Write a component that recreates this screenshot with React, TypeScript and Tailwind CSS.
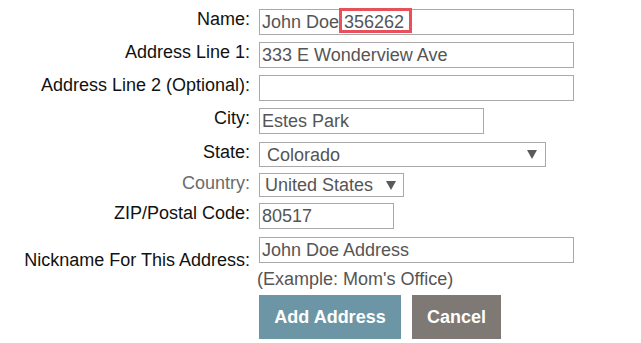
import React from "react";

function Arrow() {
  return (
    <svg width="10" height="9" viewBox="0 0 10 9" className="shrink-0">
      <polygon points="0,0 10,0 5,9" fill="#5a5a5a" />
    </svg>
  );
}

function Label({ children, gray = false, extra = "" }: { children: React.ReactNode; gray?: boolean; extra?: string }) {
  return (
    <div className={`w-[250px] shrink-0 text-right leading-[20px] ${gray ? "text-[#6b6b6b]" : "text-[#111]"} ${extra}`}>
      {children}
    </div>
  );
}

export default function App() {
  return (
    <div className="w-[641px] h-[343px] bg-white overflow-hidden font-['Liberation_Sans',Arial,sans-serif] text-[18px]">
      <div className="flex flex-col pt-[9px]">
        {/* Name */}
        <div className="flex items-start gap-[9px]">
          <Label>Name:</Label>
          <div className="relative w-[315px] h-[26px] border border-[#a9a9a9] pl-[2px] flex items-center text-[#555] leading-[20px] whitespace-pre">
            John Doe 356262
            <span className="absolute left-[79px] top-[-2px] w-[73px] h-[25px] border-[3px] border-[#e8505b]" />
          </div>
        </div>
        {/* Address Line 1 */}
        <div className="flex items-start gap-[9px] mt-[7px]">
          <Label>Address Line 1:</Label>
          <div className="w-[315px] h-[26px] border border-[#a9a9a9] pl-[2px] flex items-center text-[#555] leading-[20px]">
            333 E Wonderview Ave
          </div>
        </div>
        {/* Address Line 2 */}
        <div className="flex items-start gap-[9px] mt-[7px]">
          <Label>Address Line 2 (Optional):</Label>
          <div className="w-[315px] h-[26px] border border-[#a9a9a9]" />
        </div>
        {/* City */}
        <div className="flex items-start gap-[9px] mt-[7px]">
          <Label>City:</Label>
          <div className="w-[225px] h-[26px] border border-[#a9a9a9] pl-[2px] flex items-center text-[#555] leading-[20px]">
            Estes Park
          </div>
        </div>
        {/* State */}
        <div className="flex items-start gap-[9px] mt-[8px]">
          <Label>State:</Label>
          <div className="w-[287px] h-[25px] border border-[#a9a9a9] pl-[7px] pr-[8px] flex items-center text-[#555] leading-[20px]">
            <span>Colorado</span>
            <span className="ml-auto flex"><Arrow /></span>
          </div>
        </div>
        {/* Country */}
        <div className="flex items-start gap-[9px] mt-[6px]">
          <Label gray>Country:</Label>
          <div className="w-[145px] h-[24px] border border-[#a9a9a9] pl-[5px] pr-[7px] flex items-center text-[#555] leading-[20px]">
            <span>United States</span>
            <span className="ml-auto flex"><Arrow /></span>
          </div>
        </div>
        {/* ZIP */}
        <div className="flex items-start gap-[9px] mt-[6px]">
          <Label>ZIP/Postal Code:</Label>
          <div className="w-[135px] h-[26px] border border-[#a9a9a9] pl-[2px] flex items-center text-[#555] leading-[20px]">
            80517
          </div>
        </div>
        {/* Nickname */}
        <div className="flex items-start gap-[9px] mt-[8px]">
          <Label extra="pt-[13px]">Nickname For This Address:</Label>
          <div className="flex flex-col">
            <div className="w-[315px] h-[26px] border border-[#a9a9a9] pl-[2px] flex items-center text-[#555] leading-[20px]">
              John Doe Address
            </div>
            <div className="mt-[6px] -ml-[2px] leading-[20px] text-[#555]">(Example: Mom's Office)</div>
            <div className="flex gap-[11px] mt-[6px]">
              <div className="h-[44px] w-[142px] bg-[#6c96a5] text-white font-bold flex items-center justify-center">
                Add Address
              </div>
              <div className="h-[44px] w-[89px] bg-[#7e7974] text-white font-bold flex items-center justify-center">
                Cancel
              </div>
            </div>
          </div>
        </div>
      </div>
    </div>
  );
}
